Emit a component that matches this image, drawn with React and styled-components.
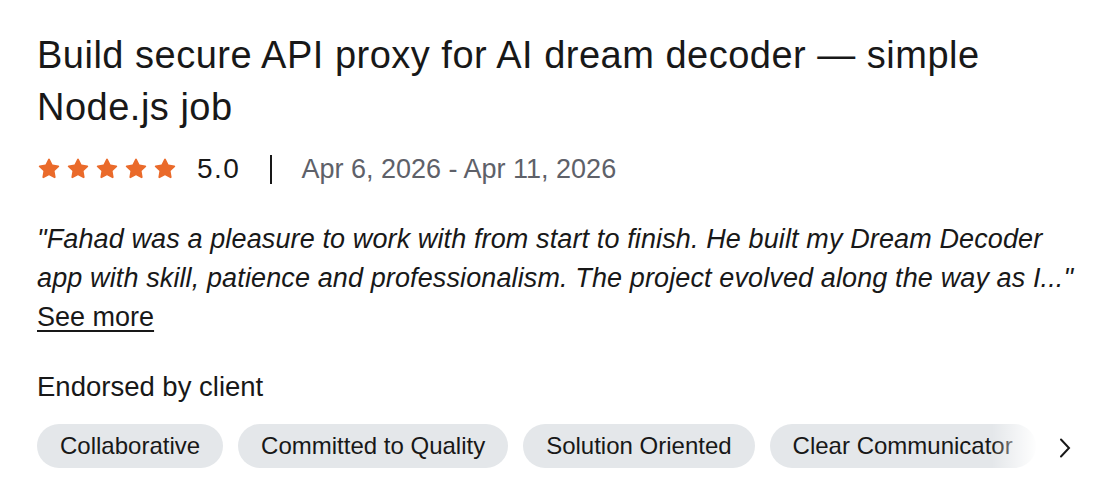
import React from "react";
import styled, { createGlobalStyle } from "styled-components";

const GlobalStyle = createGlobalStyle`
  html, body {
    margin: 0;
    padding: 0;
    background: #ffffff;
  }
  body {
    font-family: "Liberation Sans", Arial, sans-serif;
    color: #181818;
  }
`;

const Card = styled.div`
  width: 1100px;
  height: 498px;
  box-sizing: border-box;
  padding: 29px 20px 0 37px;
  overflow: hidden;
`;

const Title = styled.h2`
  margin: 0;
  font-size: 38px;
  font-weight: 400;
  line-height: 52px;
  letter-spacing: 0.5px;
  color: #181818;
`;

const MetaRow = styled.div`
  display: flex;
  align-items: center;
  margin-top: 21px;
  height: 30px;
`;

const Stars = styled.div`
  display: flex;
  gap: 5px;
`;

const Score = styled.span`
  font-size: 28px;
  letter-spacing: 1.5px;
  margin-left: 20px;
  color: #181818;
`;

const Divider = styled.span`
  width: 2px;
  height: 29px;
  background: #181818;
  margin: 0 29px 0 30px;
`;

const Dates = styled.span`
  font-size: 27px;
  color: #5e6169;
`;

const Quote = styled.p`
  margin: 36px 0 0;
  font-style: italic;
  font-size: 27px;
  line-height: 39px;
  letter-spacing: 0.12px;
  color: #181818;
`;

const SeeMore = styled.a`
  display: inline-block;
  font-size: 27px;
  line-height: 39px;
  color: #181818;
  text-decoration: underline;
  text-underline-offset: 4px;
  text-decoration-thickness: 1.5px;
  cursor: pointer;
`;

const Label = styled.div`
  margin-top: 33px;
  font-size: 27.5px;
  line-height: 34px;
  color: #181818;
`;

const ChipRow = styled.div`
  display: flex;
  align-items: center;
  margin-top: 20px;
`;

const ChipTrack = styled.div`
  display: flex;
  gap: 15px;
  width: 1003px;
  overflow: hidden;
  position: relative;

  &::after {
    content: "";
    position: absolute;
    top: 0;
    right: 0;
    width: 48px;
    height: 100%;
    background: linear-gradient(to right, rgba(255, 255, 255, 0), #ffffff 95%);
  }
`;

const Chip = styled.span`
  flex: none;
  height: 44px;
  display: inline-flex;
  align-items: center;
  padding: 0 23px;
  border-radius: 22px;
  background: #e4e7ea;
  font-size: 24px;
  color: #181818;
`;

const NextButton = styled.button`
  border: 0;
  background: none;
  padding: 0;
  margin: 4px 0 0 19px;
  display: flex;
  align-items: center;
  cursor: pointer;
`;

const Star = () => (
  <svg width="24" height="24" viewBox="0 0 24 24">
    <path
      d="M12 1.6c.4 0 .7.2.9.6l2.6 5.4 5.9.8c.8.1 1.1 1.1.5 1.6l-4.3 4.1 1 5.9c.1.8-.7 1.4-1.4 1L12 18.2l-5.2 2.8c-.7.4-1.5-.2-1.4-1l1-5.9-4.3-4.1c-.6-.5-.3-1.5.5-1.6l5.9-.8 2.6-5.4c.2-.4.5-.6.9-.6z"
      fill="#ea6a2a"
    />
  </svg>
);

const Chevron = () => (
  <svg width="12" height="22" viewBox="0 0 12 22">
    <path d="M2 2.5l8 8.5-8 8.5" fill="none" stroke="#181818" strokeWidth="2" strokeLinecap="round" />
  </svg>
);

const tags = ["Collaborative", "Committed to Quality", "Solution Oriented", "Clear Communicator"];

export default function App() {
  return (
    <>
      <GlobalStyle />
      <Card>
        <Title>Build secure API proxy for AI dream decoder — simple Node.js job</Title>
        <MetaRow>
          <Stars>
            {[0, 1, 2, 3, 4].map(i => (
              <Star key={i} />
            ))}
          </Stars>
          <Score>5.0</Score>
          <Divider />
          <Dates>Apr 6, 2026 - Apr 11, 2026</Dates>
        </MetaRow>
        <Quote>
          "Fahad was a pleasure to work with from start to finish. He built my Dream Decoder app with skill,
          patience and professionalism. The project evolved along the way as I..."
        </Quote>
        <SeeMore>See more</SeeMore>
        <Label>Endorsed by client</Label>
        <ChipRow>
          <ChipTrack>
            {tags.map(t => (
              <Chip key={t}>{t}</Chip>
            ))}
          </ChipTrack>
          <NextButton aria-label="Next">
            <Chevron />
          </NextButton>
        </ChipRow>
      </Card>
    </>
  );
}
